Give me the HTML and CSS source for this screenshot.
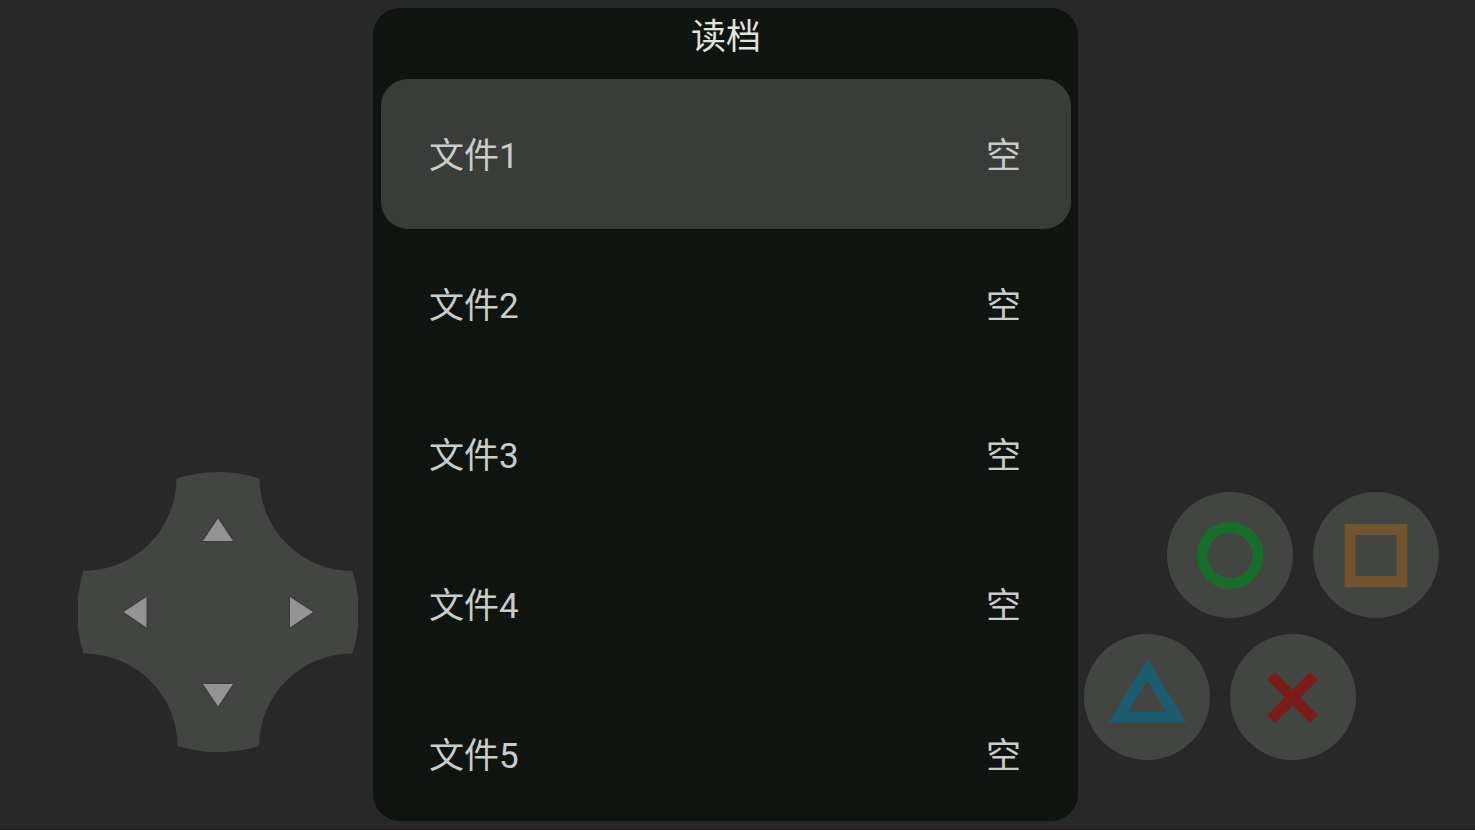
FILE: index.html
```
<!DOCTYPE html>
<html lang="zh-CN">
<head>
<meta charset="utf-8">
<meta name="viewport" content="width=device-width, initial-scale=1">
<title>读档</title>
<link rel="stylesheet" href="styles.css">
</head>
<body>
<main class="screen">
  <section class="side side-left" aria-label="方向键">
    <div class="dpad">
      <svg class="dpad-shape" viewBox="0 0 280 280" aria-hidden="true">
        <path d="M98.500 6.500A140 140 0 0 1 181.500 6.500A93 93 0 0 0 274.500 99A140 140 0 0 1 274.500 181.500A93 93 0 0 0 181 274A140 140 0 0 1 99.500 274A93 93 0 0 0 5.500 181.500A140 140 0 0 1 5.500 99A93 93 0 0 0 98.500 6.500Z"/>
      </svg>
      <button class="dpad-key up" type="button" aria-label="上"><svg class="arrow" viewBox="0 0 34 34"><path d="M17 6.500L32 29H2Z"/></svg></button>
      <button class="dpad-key left" type="button" aria-label="左"><svg class="arrow" viewBox="0 0 34 34"><path d="M5.500 17L28.500 2V32.500Z"/></svg></button>
      <button class="dpad-key right" type="button" aria-label="右"><svg class="arrow" viewBox="0 0 34 34"><path d="M29 17L6 2V32.500Z"/></svg></button>
      <button class="dpad-key down" type="button" aria-label="下"><svg class="arrow" viewBox="0 0 34 34"><path d="M17 28.500L32 6H2Z"/></svg></button>
    </div>
  </section>

  <section class="dialog" role="dialog" aria-labelledby="dialog-title">
    <h1 class="dialog-title" id="dialog-title">读档</h1>
    <ul class="slots">
      <li><button class="slot selected" type="button"><span>文件1</span><span>空</span></button></li>
      <li><button class="slot" type="button"><span>文件2</span><span>空</span></button></li>
      <li><button class="slot" type="button"><span>文件3</span><span>空</span></button></li>
      <li><button class="slot" type="button"><span>文件4</span><span>空</span></button></li>
      <li><button class="slot" type="button"><span>文件5</span><span>空</span></button></li>
    </ul>
  </section>

  <section class="side side-right" aria-label="动作键">
    <div class="pad">
      <div class="pad-row pad-row-top">
        <button class="pad-key" type="button" aria-label="圆圈"><svg viewBox="0 0 126 126"><circle class="green" cx="63" cy="63.500" r="28"/></svg></button>
        <button class="pad-key" type="button" aria-label="方块"><svg viewBox="0 0 126 126"><rect class="orange" x="37" y="37.500" width="52" height="52"/></svg></button>
      </div>
      <div class="pad-row">
        <button class="pad-key" type="button" aria-label="三角"><svg viewBox="0 0 126 126"><path class="blue" fill-rule="evenodd" d="M63.500 25L102.500 88.500H24.500ZM63.500 46.500L44.500 77.500H82.500Z"/></svg></button>
        <button class="pad-key" type="button" aria-label="叉"><svg viewBox="0 0 126 126"><path class="red" d="M41 42L84 85M84 42L41 85"/></svg></button>
      </div>
    </div>
  </section>
</main>
</body>
</html>
```
FILE: styles.css
```
* {
  box-sizing: border-box;
}

body {
  margin: 0;
  background: #282828;
  color: #c9ccc8;
  font-family: Roboto, "Noto Sans CJK SC", sans-serif;
}

button {
  border: 0;
  padding: 0;
  background: none;
  color: inherit;
  font: inherit;
}

.screen {
  display: grid;
  grid-template-columns: 1fr minmax(0, 705px) 1fr;
  grid-template-rows: minmax(0, 1fr);
  height: 100vh;
  padding: 8px 24px 8px 0;
  border-bottom: 1px solid #211820;
}

.side {
  display: flex;
  align-items: flex-end;
}

.side-left {
  justify-content: flex-end;
  padding: 0 15px 69px 0;
}

.side-right {
  padding: 0 0 61px 6px;
}

.dpad {
  position: relative;
  display: grid;
  grid-template: repeat(3, 1fr) / repeat(3, 1fr);
  grid-template-areas: ". up ." "left . right" ". down .";
  width: 280px;
  aspect-ratio: 1;
  padding: 16px;
}

.dpad-shape {
  position: absolute;
  inset: 0;
  fill: #434542;
}

.dpad-key {
  position: relative;
  display: grid;
  place-items: center;
}

.up { grid-area: up; }
.left { grid-area: left; }
.right { grid-area: right; }
.down { grid-area: down; }

.arrow {
  width: 34px;
  height: 34px;
  overflow: visible;
  fill: #959395;
  filter: drop-shadow(0 0 1px #2c2a2c);
}

.dialog {
  display: flex;
  flex-direction: column;
  min-height: 0;
  padding: 0 7px 0 8px;
  overflow: hidden;
  border-radius: 27px;
  background: #0f1410;
}

.dialog-title {
  flex: none;
  margin: 0;
  padding: 8px 0 19px;
  color: #e0e3de;
  font-size: 35px;
  font-weight: 400;
  line-height: 44px;
  text-align: center;
}

.slots {
  flex: 1;
  min-height: 0;
  margin: 0;
  padding: 0;
  overflow-y: auto;
  scrollbar-width: none;
  list-style: none;
}

.slot {
  display: flex;
  align-items: center;
  justify-content: space-between;
  width: 100%;
  height: 150px;
  padding: 5px 50px 0 48px;
  border-radius: 27px;
  font-size: 35px;
  line-height: 44px;
}

.selected {
  background: #3a3c39;
}

.pad {
  display: flex;
  flex-direction: column;
  gap: 16px;
  width: 355px;
}

.pad-row {
  display: flex;
  gap: 20px;
}

.pad-row-top {
  justify-content: flex-end;
}

.pad-key {
  width: 126px;
  height: 126px;
  border-radius: 50%;
  background: #434542;
}

.pad-key svg {
  display: block;
  fill: none;
  stroke-width: 11;
}

.green { stroke: #1a6c29; }
.orange { stroke: #725530; }
.blue { fill: #1c5c6e; }
.red { stroke: #7a1c1a; }
```
